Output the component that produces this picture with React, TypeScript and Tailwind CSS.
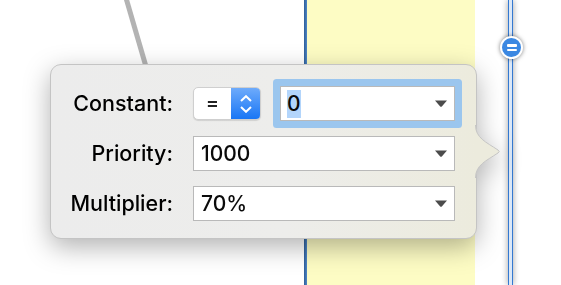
import React from "react";

function Caret() {
  return (
    <svg width="12" height="7" viewBox="0 0 12 7" className="shrink-0">
      <path d="M0 0.5 L12 0.5 L6.8 6.5 Q6 7.2 5.2 6.5 Z" fill="#4b4b4b" />
    </svg>
  );
}

function ComboField({ value, selected }: { value: string; selected?: boolean }) {
  return (
    <div className="flex h-[35px] items-center justify-between border border-[#b9b9b9] bg-white pl-[6px] pr-[7px]">
      <span
        className={
          selected
            ? "bg-[#b3d5fb] text-[21px] leading-[28px] font-[450] text-[#0a0a0a]"
            : "pl-[1px] text-[21px] leading-[28px] font-[450] text-[#0a0a0a]"
        }
      >
        {value}
      </span>
      <Caret />
    </div>
  );
}

function Label({ children }: { children: React.ReactNode }) {
  return (
    <div className="flex h-[35px] items-center justify-end text-[21.5px] font-[450] text-black">{children}</div>
  );
}

export default function App() {
  return (
    <div
      className="relative h-[285px] w-[561px] overflow-hidden bg-white"
      style={{ fontFamily: "Inter, 'Noto Sans', sans-serif" }}
    >
      {/* canvas */}
      <div className="flex h-full">
        <div className="relative w-[304px] bg-white">
          <svg width="304" height="285" className="absolute left-0 top-0">
            <line x1="126" y1="-2" x2="147" y2="70" stroke="#b3b3b3" strokeWidth="5" />
          </svg>
        </div>
        <div className="w-[3px] bg-[linear-gradient(90deg,#2d5e98,#4f86c6)]" />
        <div className="w-[168px] bg-[#fdfcc4]" />
        <div className="relative flex-1 bg-white pl-[33px]">
          <div className="h-full w-[5px] border-x-[1.5px] border-[#3479d1] bg-[#dbe8f8] shadow-[0_0_6px_rgba(0,0,0,0.4)]" />
          <div className="absolute left-[25px] top-[36px] flex h-[23px] w-[23px] flex-col items-center justify-center gap-[2px] rounded-full border-2 border-white bg-[#3b88e2] shadow-[0_0_4px_rgba(0,0,0,0.5)]">
            <div className="h-[2.5px] w-[10px] rounded-[1px] bg-white" />
            <div className="h-[2.5px] w-[10px] rounded-[1px] bg-white" />
          </div>
        </div>
      </div>

      {/* popover */}
      <div className="absolute left-[50px] top-[64px] drop-shadow-[0_8px_13px_rgba(0,0,0,0.3)]">
        <div className="relative h-[175px] w-[427px] rounded-[11px] border border-[#c4c4c4] bg-[linear-gradient(90deg,#ececec_0%,#ededeb_55%,#ecebdd_100%)] pt-[21px]">
          <div className="grid grid-cols-[122px_262px] gap-x-[20px] gap-y-[15px]">
            <Label>Constant:</Label>
            <div className="flex items-center gap-[19px]">
              <div className="flex h-[33px] w-[68px] overflow-hidden rounded-[5px] border border-[#cfcfcf] bg-white shadow-[0_1px_1px_rgba(0,0,0,0.12)]">
                <div className="flex flex-1 items-center justify-center pb-[2px] text-[20px] font-medium text-[#222]">=</div>
                <div className="flex w-[29px] flex-col items-center justify-center gap-[4px] bg-[linear-gradient(180deg,#6eabfb,#1976f5)]">
                  <svg width="12" height="7" viewBox="0 0 12 7">
                    <path d="M1 6 L6 1.2 L11 6" fill="none" stroke="white" strokeWidth="2" />
                  </svg>
                  <svg width="12" height="7" viewBox="0 0 12 7">
                    <path d="M1 1 L6 5.8 L11 1" fill="none" stroke="white" strokeWidth="2" />
                  </svg>
                </div>
              </div>
              <div className="flex-1 rounded-[1px] shadow-[0_0_0_7px_#9bc6ee]">
                <ComboField value="0" selected />
              </div>
            </div>
            <Label>Priority:</Label>
            <ComboField value="1000" />
            <Label>Multiplier:</Label>
            <ComboField value="70%" />
          </div>
          <svg width="28" height="56" viewBox="0 0 28 56" className="absolute right-[-26px] top-[60px]">
            <path
              d="M0 0 C2 0 2 0 2 1 C2 13 12 17 24 25 Q26.5 26.5 24 28 C12 36 2 40 2 52 C2 53 2 53 0 53 Z"
              fill="#ecebdd"
            />
            <path
              d="M1.5 0 C1.5 13 12 17 24 25 Q26.5 26.5 24 28 C12 36 1.5 40 1.5 53"
              fill="none"
              stroke="#c4c4c4"
              strokeWidth="1"
            />
          </svg>
        </div>
      </div>
    </div>
  );
}
